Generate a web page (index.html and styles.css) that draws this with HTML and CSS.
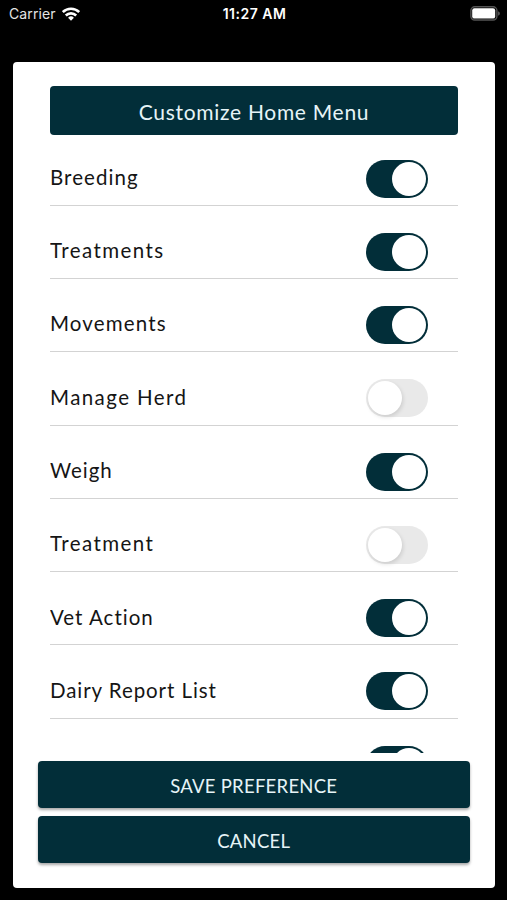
FILE: index.html
```
<!DOCTYPE html>
<html lang="en">
<head>
<meta charset="utf-8">
<title>Customize Home Menu</title>
<link rel="stylesheet" href="styles.css">
</head>
<body>
<header class="status">
  <div class="carrier"><span>Carrier</span>
    <svg class="wifi" viewBox="0 0 18 14" width="18" height="14"><g fill="none" stroke="#fff" stroke-width="2.6"><path d="M.8 5.1a11.7 11.7 0 0 1 16.4 0"/><path d="M3.8 8.5a7.4 7.4 0 0 1 10.4 0"/></g><path fill="#fff" d="M9 13.7 6.1 10.8a4.1 4.1 0 0 1 5.8 0z"/></svg>
  </div>
  <time class="time">11:27 AM</time>
  <svg class="battery" viewBox="0 0 31 15" width="31" height="15"><rect x=".9" y=".8" width="26" height="13.2" rx="3.8" fill="none" stroke="#555" stroke-width="1.4"/><rect x="2.2" y="2.2" width="23" height="10.4" rx="2.2" fill="#fff"/><path fill="#666" d="M28.2 5.2c2.1.8 2.1 3.7 0 4.5z"/></svg>
</header>
<main class="card">
  <h1 class="title"><span>Customize Home Menu</span></h1>
  <ul class="list">
    <li class="row"><span class="label breeding">Breeding</span><span class="toggle on"></span></li>
    <li class="row"><span class="label treatments">Treatments</span><span class="toggle on"></span></li>
    <li class="row"><span class="label movements">Movements</span><span class="toggle on"></span></li>
    <li class="row"><span class="label herd">Manage Herd</span><span class="toggle"></span></li>
    <li class="row"><span class="label weigh">Weigh</span><span class="toggle on"></span></li>
    <li class="row"><span class="label treatment">Treatment</span><span class="toggle"></span></li>
    <li class="row"><span class="label vet">Vet Action</span><span class="toggle on"></span></li>
    <li class="row"><span class="label dairy">Dairy Report List</span><span class="toggle on"></span></li>
    <li class="row"><span class="label"></span><span class="toggle on"></span></li>
  </ul>
  <div class="actions">
    <button class="button save" type="button"><span>SAVE PREFERENCE</span></button>
    <button class="button cancel" type="button"><span>CANCEL</span></button>
  </div>
</main>
</body>
</html>
```
FILE: styles.css
```
* { box-sizing: border-box; }
body {
  margin: 0;
  height: 900px;
  overflow: hidden;
  background: #000;
  font-family: Lato, "Noto Sans", sans-serif;
}
.status {
  display: grid;
  grid-template-columns: 1fr auto 1fr;
  align-items: center;
  height: 62px;
  padding: 0 6px 35px 9px;
  color: #fff;
  font-family: Inter, sans-serif;
  font-size: 14px;
}
.carrier { display: flex; align-items: center; gap: 6px; color: #e4e4e4; letter-spacing: .12px; }
.wifi { display: block; }
.time { font-weight: 600; font-size: 14px; letter-spacing: .5px; margin-left: -1px; }
.battery { justify-self: end; }
.card {
  display: flex;
  flex-direction: column;
  width: 481.5px;
  height: 826px;
  margin-left: 13px;
  padding: 24.3px 24.5px;
  background: #fff;
  border-radius: 4px;
}
.title {
  display: flex;
  flex: none;
  align-items: center;
  justify-content: center;
  height: 49px;
  margin: 0 12px 0 12.5px;
  padding-top: 1px;
  border-radius: 4px;
  background: #022e39;
  color: #e6f4f7;
  font-size: 21px;
  font-weight: 400;
  letter-spacing: .7px;
}
.list {
  flex: none;
  height: 618px;
  margin: 0 12px 0 12.5px;
  padding: 0;
  overflow: hidden;
  list-style: none;
}
.row {
  display: flex;
  align-items: flex-end;
  justify-content: space-between;
  height: 73.27px;
  padding: 0 30px 7.3px 0;
  border-bottom: 1.4px solid #d3d3d3;
}
.row:first-child { height: 70.5px; }
.label {
  padding-bottom: 7.6px;
  color: #151515;
  font-size: 20.5px;
  line-height: 26px;
  letter-spacing: .7px;
  white-space: nowrap;
}
.breeding { letter-spacing: 1.07px; }
.treatments, .treatment { letter-spacing: 1.42px; }
.movements { letter-spacing: 1.15px; }
.herd { letter-spacing: 1.42px; }
.weigh { letter-spacing: .95px; }
.vet { letter-spacing: 1px; }
.dairy { letter-spacing: .93px; }
.toggle {
  display: flex;
  width: 62.5px;
  height: 38px;
  padding: 2px;
  border-radius: 19px;
  background: #e9e9e9;
}
.toggle::before {
  content: "";
  width: 34px;
  height: 34px;
  border-radius: 50%;
  background: #fff;
  box-shadow: 1px 2px 4px rgba(0, 0, 0, .13);
}
.toggle.on { justify-content: flex-end; background: #022e39; }
.toggle.on::before { box-shadow: none; }
.actions { display: flex; flex-direction: column; gap: 7.5px; margin-top: 7.5px; }
.button {
  height: 47.5px;
  padding: 3px 0 0;
  border: 0;
  border-radius: 4px;
  background: #022e39;
  box-shadow: 0 2px 3px rgba(0, 0, 0, .35);
  color: #e6f4f7;
  font: 400 18.5px Lato, sans-serif;
  letter-spacing: .25px;
}
```
